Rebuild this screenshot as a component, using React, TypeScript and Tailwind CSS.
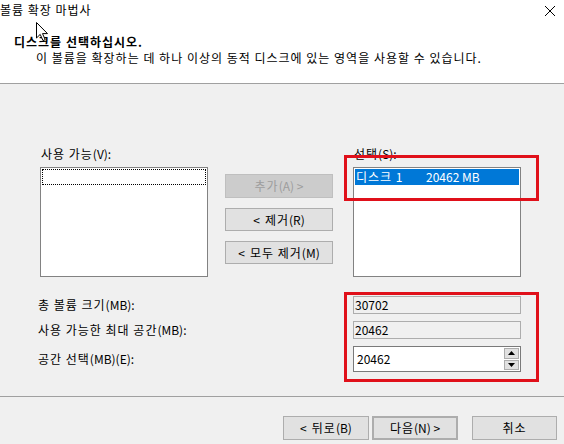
import React from 'react';

const font = { fontFamily: "'Noto Sans CJK KR', 'Malgun Gothic', sans-serif" };

const WinButton = ({ children, className = '' }: { children: React.ReactNode; className?: string }) => (
  <div
    className={`flex items-center justify-center border border-[#adadad] bg-[#e1e1e1] text-[12px] leading-none text-black ${className}`}
  >
    {children}
  </div>
);

// Latin text in Malgun Gothic runs tighter than the hangul, so drop the tracking there
const L = ({ children }: { children: React.ReactNode }) => <span className="tracking-normal">{children}</span>;

const App = () => {
  return (
    <div className="relative h-[444px] w-[564px] overflow-hidden bg-[#f0f0f0] tracking-[1px] text-black" style={font}>
      {/* Header */}
      <div className="h-[84px] border-b border-[#a0a0a0] bg-white">
        <div className="flex h-[20px] items-center justify-between pr-[4px]">
          <span className="text-[12px] leading-none">볼륨 확장 마법사</span>
          <svg width="12" height="12" viewBox="0 0 12 12" className="mr-[4px] mt-[2px]">
            <path d="M1 1 L11 11 M11 1 L1 11" stroke="#000" strokeWidth="1" />
          </svg>
        </div>
        <div className="pl-[14px] pt-[14px] text-[12px] font-bold leading-[16px]">디스크를 선택하십시오.</div>
        <div className="pl-[36px] text-[12px] leading-[16px]">
          이 볼륨을 확장하는 데 하나 이상의 동적 디스크에 있는 영역을 사용할 수 있습니다.
        </div>
      </div>

      {/* Lists */}
      <div className="flex pl-[40px] pt-[62px]">
        <div className="w-[168px]">
          <div className="h-[16px] pl-[1px] text-[12px] leading-[16px]">
            사용 가능<L>(V):</L>
          </div>
          <div className="mt-[5px] h-[110px] border border-[#828282] bg-white p-[1px]">
            <div className="h-[16px] border border-dotted border-black" />
          </div>
        </div>

        <div className="ml-[17px] flex w-[108px] flex-col pt-[28px]">
          <div className="flex h-[24px] items-center justify-center border border-[#bfbfbf] bg-[#cccccc] text-[12px] leading-none text-[#9d9d9d]">
            추가<L>(A) &gt;</L>
          </div>
          <WinButton className="mt-[10px] h-[23px]">
            <L>&lt;</L>
            <span className="ml-[5px]">제거</span>
            <L>(R)</L>
          </WinButton>
          <WinButton className="mt-[10px] h-[23px]">
            <L>&lt;</L>
            <span className="ml-[5px]">모두 제거</span>
            <L>(M)</L>
          </WinButton>
        </div>

        <div className="ml-[20px] w-[168px]">
          <div className="h-[16px] pl-[1px] text-[12px] leading-[16px]">
            선택<L>(S):</L>
          </div>
          <div className="mt-[5px] h-[110px] border border-[#828282] bg-white p-[1px]">
            <div className="flex h-[16px] items-center bg-[#0078d7] pl-[1px] text-[12px] leading-none text-white">
              <span className="w-[70px]">
                디스크 <L>1</L>
              </span>
              <L>20462 MB</L>
            </div>
          </div>
        </div>
      </div>

      {/* Sizes */}
      <div className="mt-[19px] grid grid-cols-[315px_168px] items-center gap-y-[7px] pl-[38px]">
        <div className="text-[12px] leading-none">
          총 볼륨 크기<L>(MB):</L>
        </div>
        <div className="flex h-[18px] items-center border border-[#adadad] bg-[#f0f0f0] pl-[1px] text-[12px] leading-none tracking-normal">
          30702
        </div>
        <div className="text-[12px] leading-none">
          사용 가능한 최대 공간<L>(MB):</L>
        </div>
        <div className="flex h-[18px] items-center border border-[#adadad] bg-[#f0f0f0] pl-[1px] text-[12px] leading-none tracking-normal">
          20462
        </div>
        <div className="text-[12px] leading-none">
          공간 선택<L>(MB)(E):</L>
        </div>
        <div className="flex h-[26px] items-center border border-[#7a7a7a] bg-white text-[12px] leading-none tracking-normal">
          <span className="flex-1 pl-[3px]">20462</span>
          <div className="mr-[1px] flex h-[22px] w-[15px] flex-col gap-[1px]">
            <div className="flex flex-1 items-center justify-center border border-[#adadad] bg-[#e1e1e1]">
              <svg width="7" height="4" viewBox="0 0 7 4"><path d="M3.5 0 L7 4 L0 4 Z" fill="#000" /></svg>
            </div>
            <div className="flex flex-1 items-center justify-center border border-[#adadad] bg-[#e1e1e1]">
              <svg width="7" height="4" viewBox="0 0 7 4"><path d="M0 0 L7 0 L3.5 4 Z" fill="#000" /></svg>
            </div>
          </div>
        </div>
      </div>

      {/* Footer */}
      <div className="absolute bottom-0 left-0 right-0 h-[48px] border-t border-[#a0a0a0]">
        <div className="flex justify-end pr-[7px] pt-[19px]">
          <WinButton className="h-[24px] w-[86px]">
            <L>&lt;</L>
            <span className="ml-[5px]">뒤로</span>
            <L>(B)</L>
          </WinButton>
          <WinButton className="ml-[3px] h-[24px] w-[86px] border-2 border-[#0078d7]">
            다음<L>(N) &gt;</L>
          </WinButton>
          <WinButton className="ml-[14px] h-[24px] w-[85px]">취소</WinButton>
        </div>
      </div>

      {/* Red highlight boxes */}
      <div className="pointer-events-none absolute left-[344px] top-[155px] h-[46px] w-[195px] border-[3px] border-[#e0101a]" />
      <div className="pointer-events-none absolute left-[344px] top-[292px] h-[90px] w-[195px] border-[3px] border-[#e0101a]" />

      {/* Mouse cursor */}
      <svg className="absolute left-[36px] top-[22px]" width="14" height="20" viewBox="0 0 14 20">
        <path d="M0.5 0.5 L0.5 16 L4.2 12.4 L7 18.6 L9.2 17.6 L6.5 11.6 L11.5 11.6 Z" fill="#fff" stroke="#000" strokeWidth="1" />
      </svg>
    </div>
  );
};

export default App;
